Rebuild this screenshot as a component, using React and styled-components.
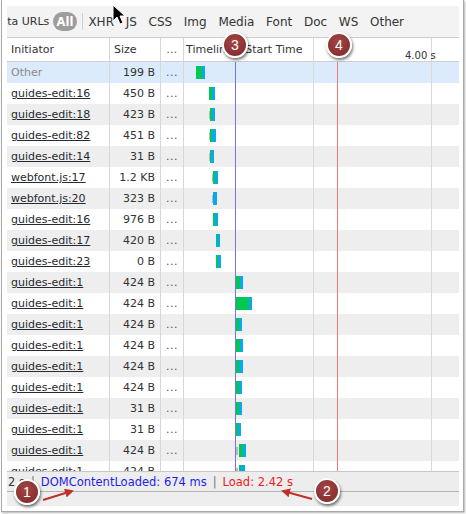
import React from 'react';
import styled, { createGlobalStyle } from 'styled-components';

const GlobalStyle = createGlobalStyle`
  html, body { margin: 0; padding: 0; background: #fff; }
  body { font-family: "DejaVu Sans", "Liberation Sans", sans-serif; color: #303030; }
  #root { width: 466px; height: 514px; }
`;

const Root = styled.div`
  position: relative;
  width: 466px;
  height: 514px;
  overflow: hidden;
  background: #fff;
`;

const Frame = styled.div`
  margin-left: 1px;
  width: 463px;
  box-sizing: border-box;
  padding: 6px 4px 5px 5px;
  border: 1px solid #a9a9a9;
  border-top: none;
  box-shadow: 1px 1px 2px rgba(0, 0, 0, 0.3);
`;

const Panel = styled.div`
  display: flex;
  flex-direction: column;
  width: 452px;
  height: 500px;
  overflow: hidden;
`;

const Toolbar = styled.div`
  display: flex;
  align-items: center;
  gap: 11.7px;
  height: 31px;
  flex: none;
  background: #f3f3f3;
  border-bottom: 1px solid #cdcdcd;
  font-size: 12px;
  color: #333;
  white-space: nowrap;
  overflow: hidden;
`;

const FilterText = styled.span`
  margin-left: ${(p) => p.$shift || 0}px;
  font-size: ${(p) => p.$size || 12}px;
`;

const Pill = styled.span`
  display: inline-flex;
  align-items: center;
  justify-content: center;
  flex: none;
  width: 24px;
  height: 19px;
  border-radius: 10px;
  background: #9d9d9d;
  color: #fff;
  font-weight: bold;
  font-size: 11.5px;
  margin-left: -8px;
`;

const Divider = styled.span`
  flex: none;
  width: 1px;
  height: 17px;
  background: #cfcfcf;
  margin: 0 -6px 0 -7px;
`;

const Table = styled.div`
  position: relative;
  flex: none;
  display: flex;
  flex-direction: column;
`;

const HeaderRow = styled.div`
  display: flex;
  height: 23px;
  border-bottom: 1px solid #cfcfcf;
  background: #fff;
  font-size: 11px;
  color: #333;
`;

const Body = styled.div`
  height: 409px;
  overflow: hidden;
`;

const Row = styled.div`
  display: flex;
  height: 21px;
  font-size: 11px;
  background: ${(p) => (p.$selected ? '#dcebfb' : p.$alt ? '#eeeeee' : '#ffffff')};
`;

const Cell = styled.div`
  display: flex;
  align-items: center;
  box-sizing: border-box;
  flex: none;
  width: ${(p) => p.$w}px;
  border-right: 1px solid #d7d7d7;
  justify-content: ${(p) => (p.$align === 'right' ? 'flex-end' : p.$align === 'center' ? 'center' : 'flex-start')};
  padding: ${(p) => (p.$align === 'right' ? '0 5px 0 0' : p.$align === 'center' ? '0' : '0 0 0 4px')};
  white-space: nowrap;
  overflow: hidden;
`;

const TimelineCell = styled.div`
  position: relative;
  flex: 1;
  display: flex;
  align-items: center;
  padding-left: 2px;
  white-space: nowrap;
`;

const Initiator = styled.span`
  color: ${(p) => (p.$muted ? '#8a8a8a' : '#262a30')};
  text-decoration: ${(p) => (p.$muted ? 'none' : 'underline')};
  text-underline-offset: 1px;
`;

const SizeText = styled.span`
  color: #333;
`;

const Dots = styled.span`
  color: #555;
  letter-spacing: 0.5px;
`;

const Track = styled.div`
  display: flex;
  align-items: center;
  height: 13px;
`;

const Seg = styled.div`
  flex: none;
  height: ${(p) => (p.$kind === 'wait' ? 8 : 13)}px;
  background: ${(p) => (p.$kind === 'wait' ? '#b9b9b9' : p.$kind === 'green' ? '#00c853' : '#0ba7f0')};
`;

const GridLayer = styled.div`
  position: absolute;
  top: 0;
  bottom: 0;
  left: 177px;
  width: 275px;
  pointer-events: none;
`;

const GridLine = styled.div`
  position: absolute;
  top: ${(p) => p.$top || 0}px;
  bottom: 0;
  left: ${(p) => p.$x}px;
  width: 1px;
  background: ${(p) => p.$color};
`;

const TickLabel = styled.span`
  position: absolute;
  top: 12px;
  left: 221px;
  font-size: 10px;
  color: #333;
`;

const StatusBar = styled.div`
  display: flex;
  align-items: center;
  gap: 6px;
  height: 19px;
  flex: none;
  background: #ededed;
  border-top: 1px solid #c6c6c6;
  font-size: 11.5px;
  padding-left: 1px;
  white-space: nowrap;
`;

const StatusText = styled.span`
  color: ${(p) => p.$color || '#333'};
`;

const Sep = styled.span`
  color: #777;
`;

const BottomStrip = styled.div`
  height: 14px;
  flex: none;
  background: #eeeeee;
  border-top: 1px solid #b4b4b4;
`;

const Badge = styled.div`
  position: absolute;
  left: ${(p) => p.$cx - 13}px;
  top: ${(p) => p.$cy - 13}px;
  width: 22px;
  height: 22px;
  border: 2px solid #fff;
  border-radius: 50%;
  background: radial-gradient(circle at 45% 35%, #a44545 0%, #8d3333 60%, #7c2929 100%);
  box-shadow: 1px 2px 3px rgba(0, 0, 0, 0.55);
  color: #fff;
  font-family: "Liberation Sans", Arial, sans-serif;
  font-size: 14px;
  display: flex;
  align-items: center;
  justify-content: center;
`;

const OverlaySvg = styled.svg`
  position: absolute;
  left: 0;
  top: 0;
  pointer-events: none;
`;

const rows = [
  { init: 'Other', size: '199 B', muted: true, segs: [['green', 196, 202], ['blue', 202, 205]] },
  { init: 'guides-edit:16', size: '450 B', segs: [['green', 209, 212], ['blue', 212, 215]] },
  { init: 'guides-edit:18', size: '423 B', segs: [['wait', 209, 210], ['green', 210, 212], ['blue', 212, 215]] },
  { init: 'guides-edit:82', size: '451 B', segs: [['wait', 209, 210], ['green', 210, 212], ['blue', 212, 216]] },
  { init: 'guides-edit:14', size: '31 B', segs: [['wait', 209, 210], ['green', 210, 211], ['blue', 211, 214]] },
  { init: 'webfont.js:17', size: '1.2 KB', segs: [['wait', 212, 213], ['green', 213, 215], ['blue', 215, 218]] },
  { init: 'webfont.js:20', size: '323 B', segs: [['wait', 212, 213], ['blue', 213, 217]] },
  { init: 'guides-edit:16', size: '976 B', segs: [['green', 213, 215], ['blue', 215, 218]] },
  { init: 'guides-edit:17', size: '420 B', segs: [['green', 216, 217], ['blue', 217, 220]] },
  { init: 'guides-edit:23', size: '0 B', segs: [['green', 216, 218], ['blue', 218, 221]] },
  { init: 'guides-edit:1', size: '424 B', segs: [['green', 236, 240], ['blue', 240, 243]] },
  { init: 'guides-edit:1', size: '424 B', segs: [['green', 236, 249], ['blue', 249, 252]] },
  { init: 'guides-edit:1', size: '424 B', segs: [['green', 236, 239], ['blue', 239, 242]] },
  { init: 'guides-edit:1', size: '424 B', segs: [['green', 236, 240], ['blue', 240, 243]] },
  { init: 'guides-edit:1', size: '424 B', segs: [['green', 236, 239], ['blue', 239, 243]] },
  { init: 'guides-edit:1', size: '424 B', segs: [['green', 236, 239], ['blue', 239, 242]] },
  { init: 'guides-edit:1', size: '31 B', segs: [['green', 236, 239], ['blue', 239, 242]] },
  { init: 'guides-edit:1', size: '31 B', segs: [['green', 236, 238], ['blue', 238, 241]] },
  { init: 'guides-edit:1', size: '424 B', segs: [['wait', 236, 238], ['green', 239, 243], ['blue', 243, 246]] },
  { init: 'guides-edit:1', size: '424 B', segs: [['wait', 236, 238], ['green', 239, 241], ['blue', 241, 245]] },
];

const TL_START = 186;

function Bar({ segs }) {
  let pos = TL_START;
  return (
    <Track>
      {segs.map(([kind, s, e], i) => {
        const ml = s - pos;
        pos = e;
        return <Seg key={i} $kind={kind} style={{ marginLeft: ml, width: e - s }} />;
      })}
    </Track>
  );
}

const filters = ['XHR', 'JS', 'CSS', 'Img', 'Media', 'Font', 'Doc', 'WS', 'Other'];

export default function App() {
  return (
    <Root>
      <GlobalStyle />
      <Frame>
        <Panel>
          <Toolbar>
            <FilterText $shift={-15} $size={11}>Data URLs</FilterText>
            <Pill>All</Pill>
            <Divider />
            {filters.map((f) => (
              <FilterText key={f}>{f}</FilterText>
            ))}
          </Toolbar>
          <Table>
            <HeaderRow>
              <Cell $w={103}>Initiator</Cell>
              <Cell $w={51}>Size</Cell>
              <Cell $w={23} $align="center"><Dots>…</Dots></Cell>
              <TimelineCell>Timeline – Start Time</TimelineCell>
            </HeaderRow>
            <Body>
              {rows.map((r, i) => (
                <Row key={i} $selected={i === 0} $alt={i % 2 === 0}>
                  <Cell $w={103}>
                    <Initiator $muted={r.muted}>{r.init}</Initiator>
                  </Cell>
                  <Cell $w={51} $align="right">
                    <SizeText>{r.size}</SizeText>
                  </Cell>
                  <Cell $w={23} $align="center">
                    <Dots>...</Dots>
                  </Cell>
                  <TimelineCell>
                    <Bar segs={r.segs} />
                  </TimelineCell>
                </Row>
              ))}
            </Body>
            <GridLayer>
              <GridLine $x={129} $color="#d9d9d9" />
              <GridLine $x={247} $color="#d9d9d9" />
              <GridLine $x={51} $top={24} $color="#7d72e4" />
              <GridLine $x={153} $top={24} $color="#ee7b73" />
              <TickLabel>4.00 s</TickLabel>
            </GridLayer>
          </Table>
          <StatusBar>
            <StatusText>2 s</StatusText>
            <Sep>|</Sep>
            <StatusText $color="#1d1df0">DOMContentLoaded: 674 ms</StatusText>
            <Sep>|</Sep>
            <StatusText $color="#f01a1a">Load: 2.42 s</StatusText>
          </StatusBar>
          <BottomStrip />
        </Panel>
      </Frame>

      <OverlaySvg width="466" height="514" viewBox="0 0 466 514">
        <defs>
          <marker id="ah" markerWidth="9" markerHeight="9" refX="7" refY="4.5" orient="auto" markerUnits="userSpaceOnUse">
            <path d="M0,0 L9,4.5 L0,9 Z" fill="#c0302b" />
          </marker>
        </defs>
        <line x1="43" y1="500" x2="72" y2="491" stroke="#c0302b" strokeWidth="2" markerEnd="url(#ah)" />
        <line x1="312" y1="499" x2="283" y2="491" stroke="#c0302b" strokeWidth="2" markerEnd="url(#ah)" />
        <path d="M113 5 L113 21 L117 17 L120 24 L123 23 L120 16 L125 16 Z" fill="#000" stroke="#fff" strokeWidth="1" />
      </OverlaySvg>

      <Badge $cx={235} $cy={45}>3</Badge>
      <Badge $cx={339} $cy={45}>4</Badge>
      <Badge $cx={27} $cy={492}>1</Badge>
      <Badge $cx={327} $cy={491}>2</Badge>
    </Root>
  );
}
